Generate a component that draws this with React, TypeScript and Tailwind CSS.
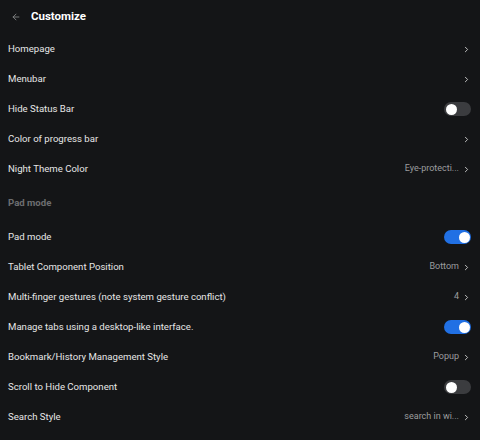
import { ChevronRight, ArrowLeft } from "lucide-react"

type Row = {
    label: string
    kind: "link" | "toggle" | "header"
    value?: string
    on?: boolean
}

const ROWS: Row[] = [
    { label: "Homepage", kind: "link" },
    { label: "Menubar", kind: "link" },
    { label: "Hide Status Bar", kind: "toggle", on: false },
    { label: "Color of progress bar", kind: "link" },
    { label: "Night Theme Color", kind: "link", value: "Eye-protecti..." },
    { label: "Pad mode", kind: "header" },
    { label: "Pad mode", kind: "toggle", on: true },
    { label: "Tablet Component Position", kind: "link", value: "Bottom" },
    { label: "Multi-finger gestures (note system gesture conflict)", kind: "link", value: "4" },
    { label: "Manage tabs using a desktop-like interface.", kind: "toggle", on: true },
    { label: "Bookmark/History Management Style", kind: "link", value: "Popup" },
    { label: "Scroll to Hide Component", kind: "toggle", on: false },
    { label: "Search Style", kind: "link", value: "search in wi..." },
]

function Toggle({ on }: { on: boolean }) {
    return (
        <div
            className={`w-[27px] h-[14px] rounded-full flex items-center px-[1.5px] ${
                on ? "bg-[#2170e4] justify-end" : "bg-[#3b3c3f] justify-start"
            }`}
        >
            <div className="w-[11px] h-[11px] rounded-full bg-white" />
        </div>
    )
}

export default function App() {
    return (
        <div className="w-[480px] h-[440px] bg-[#141517] text-[#e6e6e6] overflow-hidden font-['Roboto','Liberation_Sans',sans-serif]">
            {/* header */}
            <div className="h-[34px] flex items-center pl-[11px]">
                <ArrowLeft className="w-[10px] h-[10px] text-[#8a8b8d]" strokeWidth={2} />
                <span className="ml-[10px] text-[11.5px] font-bold text-white">Customize</span>
            </div>

            {ROWS.map((row, i) =>
                row.kind === "header" ? (
                    <div key={i} className="h-[38px] flex items-center px-2 text-[9.6px] font-bold text-[#6d6e70]">
                        {row.label}
                    </div>
                ) : (
                    <div key={i} className="h-[30px] flex items-center justify-between pl-2 pr-[9px]">
                        <span className="text-[9.6px]">{row.label}</span>
                        {row.kind === "toggle" ? (
                            <Toggle on={!!row.on} />
                        ) : (
                            <div className="flex items-center gap-[3px]">
                                {row.value && (
                                    <span className="text-[9px] text-[#9c9d9f]">{row.value}</span>
                                )}
                                <ChevronRight className="w-[9px] h-[9px] text-[#c8c8c8]" strokeWidth={2.5} />
                            </div>
                        )}
                    </div>
                )
            )}
        </div>
    )
}
